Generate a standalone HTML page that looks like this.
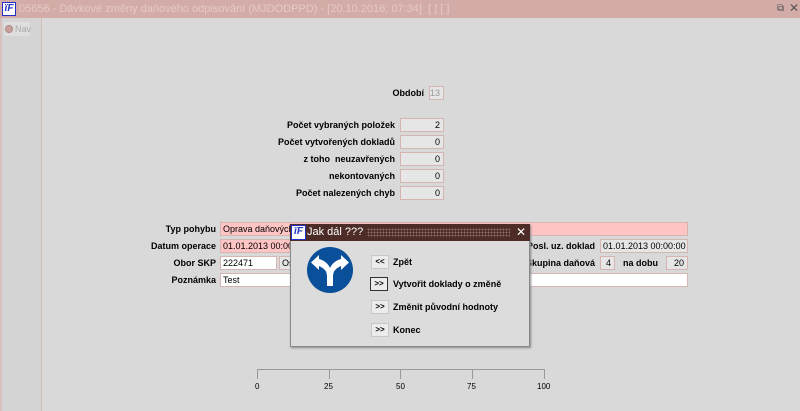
<!DOCTYPE html>
<html><head><meta charset="utf-8"><style>
*{margin:0;padding:0;box-sizing:border-box}
body{width:800px;height:411px;overflow:hidden;background:#d9d9d9;font-family:"Liberation Sans",sans-serif;font-size:9px;color:#000;position:relative}
.a{position:absolute}
.tb{left:0;top:0;width:800px;height:18px;background:#d3aca8;color:#e6c9c6;font-size:11px;line-height:18px;padding-left:19px;white-space:nowrap}
.logo{width:14px;height:14px;background:#fff;border:1px solid #2230c8;color:#2230c8;font:italic bold 10px/12px "Liberation Sans",sans-serif;text-align:center}
.lbl{font-weight:bold;text-align:right;white-space:nowrap;line-height:14px}
.box{height:14px;border:1px solid #d4b5b2;background:#e6e6e6;text-align:right;padding-right:3px;line-height:12px;white-space:nowrap;overflow:hidden}
.inp{height:14px;border:1px solid #d4b5b2;background:#fff;padding-left:2px;line-height:12px;white-space:nowrap;overflow:hidden}
.pink{background:#ffc4c4}
.btn{width:18px;height:14px;background:#ececec;border:1px solid #c8c8c8;font-size:8px;text-align:center;line-height:12px;font-weight:bold}
.bt{font-weight:bold;font-size:9px;line-height:14px;white-space:nowrap}
</style></head><body>
<div class="a tb">05656 - Dávkové změny daňového odpisování (MJDODPPD) - [20.10.2016; 07:34]&nbsp; [ ] [ ]</div>
<div class="a logo" style="left:2px;top:2px">ïF</div>
<div class="a" style="left:777px;top:3px;color:#555;font-size:10px">⧉</div>
<div class="a" style="left:789px;top:1px;color:#555;font-size:12px">✕</div>
<div class="a" style="left:0;top:18px;width:42px;height:393px;background:#d4d4d4;border-left:2px solid #d8c0bd;border-right:1px solid #d8bcb8"></div>
<div class="a" style="left:4px;top:22px;width:26px;height:14px;background:#dedede;color:#aaa;font-size:9px;line-height:14px;padding-left:11px">Nav</div>
<div class="a" style="left:5px;top:25px;width:8px;height:8px;border-radius:50%;background:#c7a19c;border:1px solid #b08a86"></div>

<div class="a lbl" style="left:330px;top:86px;width:94px">Období</div>
<div class="a box" style="left:429px;top:86px;width:15px;color:#999">13</div>

<div class="a lbl" style="left:240px;top:118px;width:155px">Počet vybraných položek</div>
<div class="a box" style="left:400px;top:118px;width:44px">2</div>
<div class="a lbl" style="left:240px;top:135px;width:155px">Počet vytvořených dokladů</div>
<div class="a box" style="left:400px;top:135px;width:44px">0</div>
<div class="a lbl" style="left:240px;top:152px;width:155px">z toho&nbsp; neuzavřených</div>
<div class="a box" style="left:400px;top:152px;width:44px">0</div>
<div class="a lbl" style="left:240px;top:169px;width:155px">nekontovaných</div>
<div class="a box" style="left:400px;top:169px;width:44px">0</div>
<div class="a lbl" style="left:240px;top:186px;width:155px">Počet nalezených chyb</div>
<div class="a box" style="left:400px;top:186px;width:44px">0</div>

<div class="a lbl" style="left:120px;top:222px;width:96px">Typ pohybu</div>
<div class="a inp pink" style="left:220px;top:222px;width:468px">Oprava daňových</div>
<div class="a lbl" style="left:120px;top:239px;width:96px">Datum operace</div>
<div class="a inp pink" style="left:220px;top:239px;width:80px">01.01.2013 00:00:00</div>
<div class="a lbl" style="left:120px;top:256px;width:96px">Obor SKP</div>
<div class="a inp" style="left:220px;top:256px;width:57px">222471</div>
<div class="a inp" style="left:279px;top:256px;width:30px;background:#e6e6e6">Os</div>
<div class="a lbl" style="left:120px;top:273px;width:96px">Poznámka</div>
<div class="a inp" style="left:220px;top:273px;width:468px">Test</div>

<div class="a lbl" style="left:500px;top:239px;width:95px">Posl. uz. doklad</div>
<div class="a box" style="left:600px;top:239px;width:88px;text-align:left;padding-left:2px;background:#e6e6e6">01.01.2013 00:00:00</div>
<div class="a lbl" style="left:500px;top:256px;width:95px">Skupina daňová</div>
<div class="a box" style="left:600px;top:256px;width:15px">4</div>
<div class="a lbl" style="left:620px;top:256px;width:38px">na dobu</div>
<div class="a box" style="left:666px;top:256px;width:22px">20</div>

<div class="a" style="left:290px;top:224px;width:240px;height:123px;background:#dcdcdc;border:1px solid #888;box-shadow:1px 1px 2px #888"></div>
<div class="a" style="left:290px;top:224px;width:240px;height:17px;background:#4d2b26;color:#fff;font-size:11px;line-height:17px;padding-left:17px">Jak dál ???</div>
<div class="a" style="left:367px;top:228px;width:143px;height:9px;background-image:radial-gradient(circle,#8a6d68 0.8px,transparent 1px);background-size:3px 3px"></div>
<div class="a logo" style="left:291px;top:225px;width:15px;height:15px">ïF</div>
<div class="a" style="left:516px;top:224px;color:#fff;font-size:12px;line-height:17px">✕</div>
<svg class="a" style="left:306px;top:246px" width="48" height="48" viewBox="0 0 48 48">
<circle cx="24" cy="24" r="23" fill="#0a4f9a"/>
<path d="M21 40 V30 Q21 24 15 21 L13 20 V24 L5 16.5 L13 9 V13 L16 14 Q22 17 24 22 Q26 17 32 14 L35 13 V9 L43 16.5 L35 24 V20 L33 21 Q27 24 27 30 V40 Z" fill="#fff"/>
</svg>
<div class="a btn" style="left:371px;top:255px">&lt;&lt;</div>
<div class="a bt" style="left:393px;top:255px">Zpět</div>
<div class="a btn" style="left:370px;top:277px;border:1px solid #333">&gt;&gt;</div>
<div class="a bt" style="left:393px;top:277px">Vytvořit doklady o změně</div>
<div class="a btn" style="left:371px;top:300px">&gt;&gt;</div>
<div class="a bt" style="left:393px;top:300px">Změnit původní hodnoty</div>
<div class="a btn" style="left:371px;top:323px">&gt;&gt;</div>
<div class="a bt" style="left:393px;top:323px">Konec</div>

<div class="a" style="left:257px;top:369px;width:288px;height:1px;background:#999"></div>
<div class="a" style="left:257px;top:369px;width:1px;height:10px;background:#999"></div>
<div class="a" style="left:329px;top:369px;width:1px;height:10px;background:#999"></div>
<div class="a" style="left:400px;top:369px;width:1px;height:10px;background:#999"></div>
<div class="a" style="left:472px;top:369px;width:1px;height:10px;background:#999"></div>
<div class="a" style="left:544px;top:369px;width:1px;height:10px;background:#999"></div>
<div class="a" style="left:255px;top:382px;font-size:8px">0</div>
<div class="a" style="left:324px;top:382px;font-size:8px">25</div>
<div class="a" style="left:396px;top:382px;font-size:8px">50</div>
<div class="a" style="left:467px;top:382px;font-size:8px">75</div>
<div class="a" style="left:537px;top:382px;font-size:8px">100</div>
</body></html>
